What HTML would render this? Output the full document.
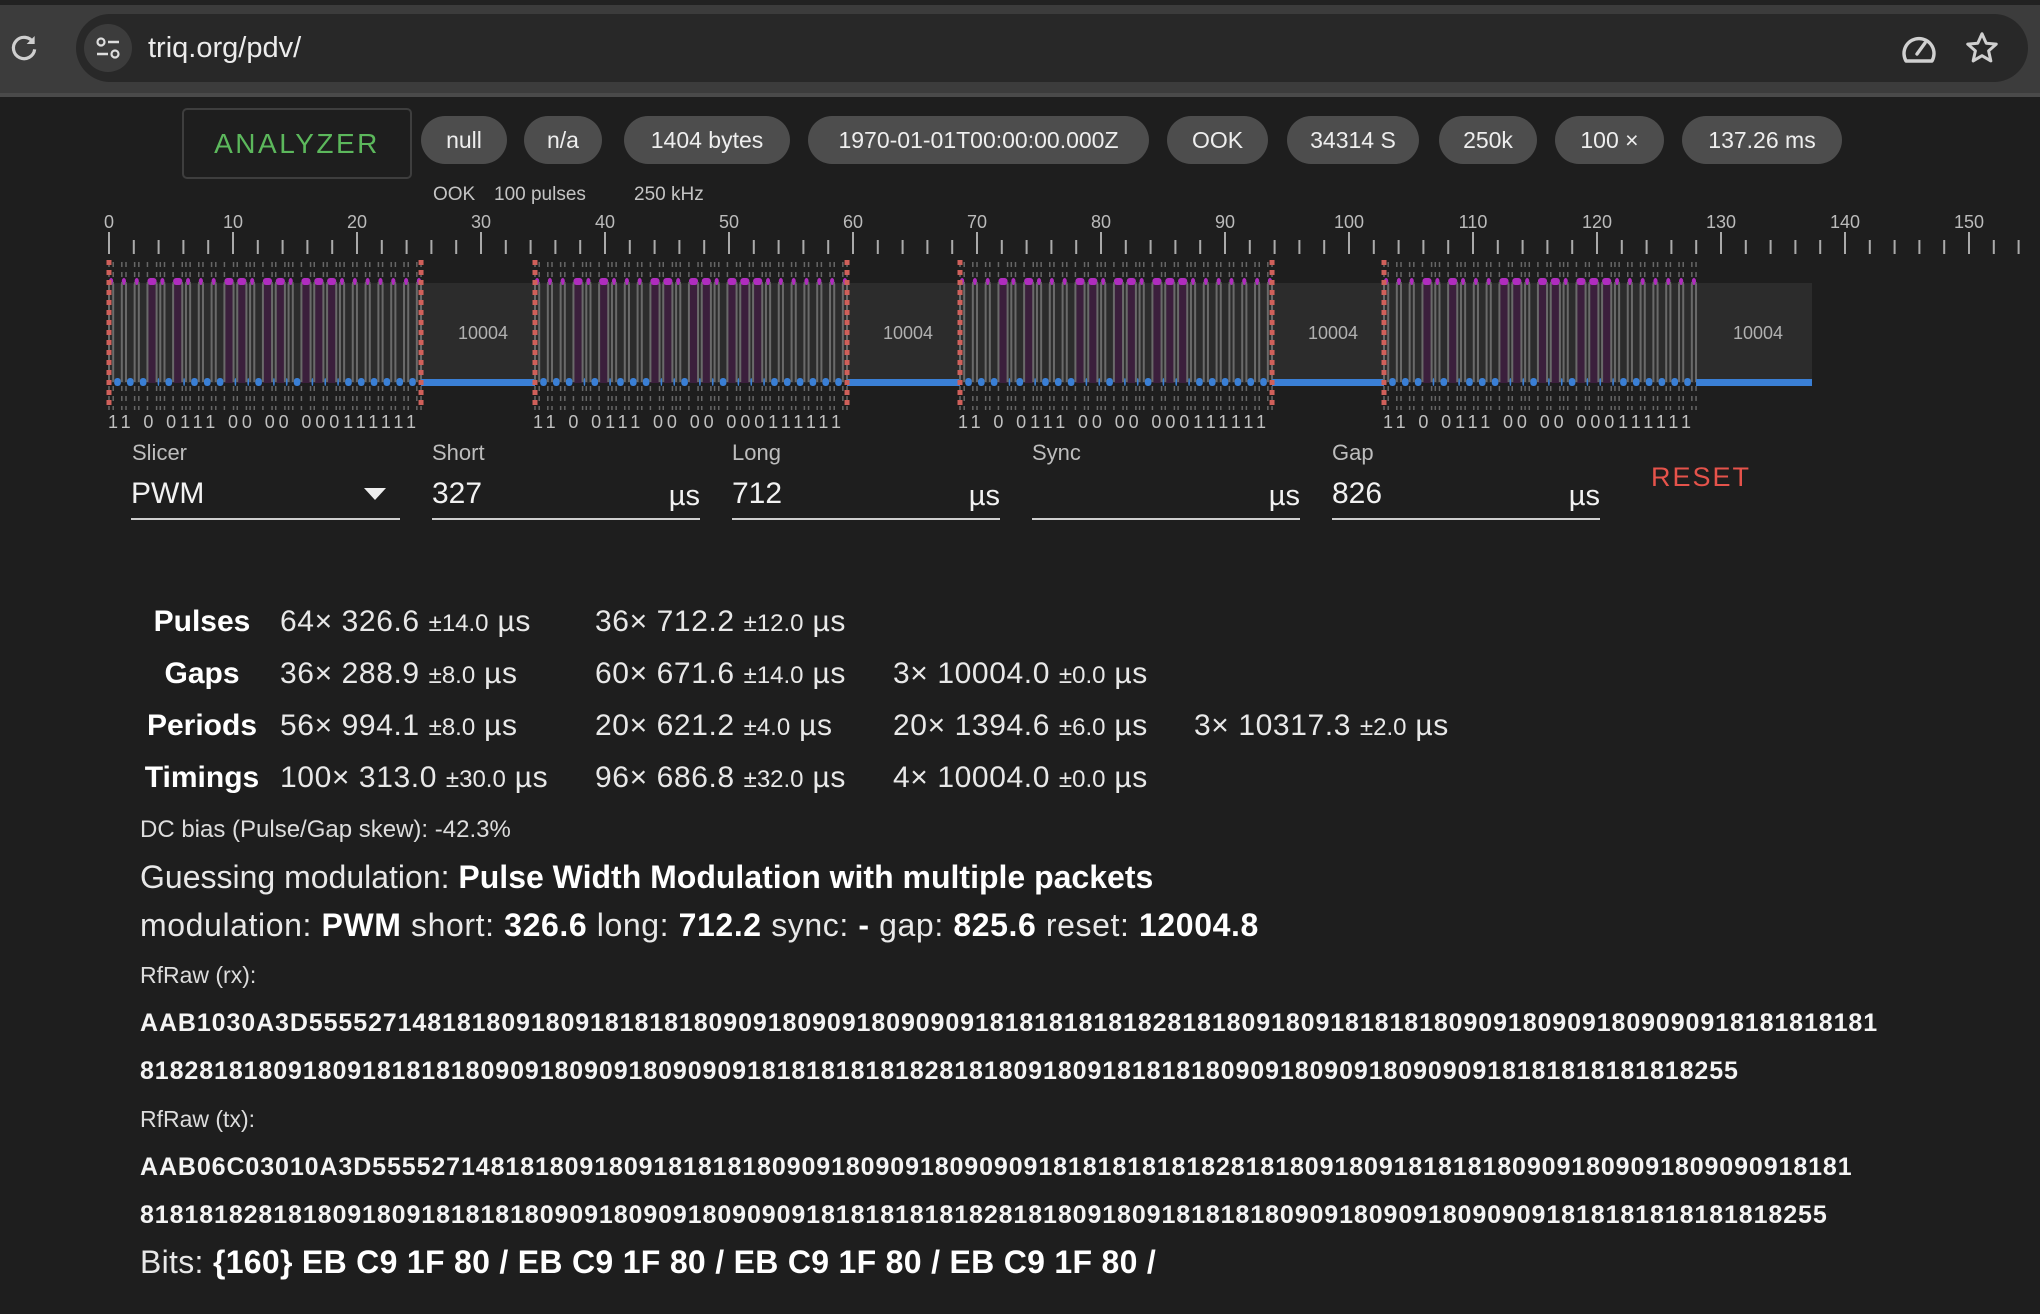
<!DOCTYPE html>
<html><head><meta charset="utf-8">
<style>
*{margin:0;padding:0;box-sizing:border-box}
html,body{width:2040px;height:1314px;overflow:hidden;background:#1e1e1e;font-family:"Liberation Sans",sans-serif;color:#e6e6e6}
.a{position:absolute;white-space:nowrap}
.chip{position:absolute;top:116px;height:48px;border-radius:24px;background:#4d4d4d;color:#eee;font-size:23px;line-height:48px;text-align:center}
.lbl{position:absolute;top:439px;font-size:22px;color:#bdbdbd;line-height:28px}
.fld{position:absolute;top:474px;height:46px;border-bottom:2px solid #cfcfcf;font-size:30px;line-height:40px;color:#f2f2f2}
.fld .u{position:absolute;right:0;top:2px;font-size:29px}
.st{position:absolute;font-size:30px;line-height:36px;color:#e8e8e8;letter-spacing:0.6px}
.st small{font-size:24px;letter-spacing:0}
.sl{position:absolute;font-size:30px;line-height:36px;font-weight:bold;color:#fff;width:200px;text-align:center;left:102px}
.hx{position:absolute;left:140px;font-size:25px;font-weight:bold;line-height:30px;color:#f4f4f4;letter-spacing:0.9px}
</style></head><body>
<div class="a" style="left:0;top:0;width:2040px;height:96px;background:#3c3c3c"></div>
<div class="a" style="left:0;top:0;width:2040px;height:5px;background:#222"></div>
<div class="a" style="left:0;top:93px;width:2040px;height:4px;background:#4a4a4a"></div>
<svg class="a" style="left:8px;top:32px" width="32" height="32" viewBox="0 0 24 24"><path d="M19 8A8 8 0 1 0 20 13" fill="none" stroke="#cfcfcf" stroke-width="2.4"/><path d="M20 3v6h-6z" fill="#cfcfcf"/></svg>
<div class="a" style="left:76px;top:14px;width:1952px;height:68px;border-radius:34px;background:#282828"></div>
<div class="a" style="left:84px;top:24px;width:48px;height:48px;border-radius:24px;background:#3c3c3c"></div>
<svg class="a" style="left:94px;top:34px" width="28" height="28" viewBox="0 0 28 28"><circle cx="7" cy="8" r="3.5" fill="none" stroke="#ddd" stroke-width="2.2"/><path d="M14 8h11M3 20h11" stroke="#ddd" stroke-width="2.6"/><circle cx="21" cy="20" r="3.5" fill="none" stroke="#ddd" stroke-width="2.2"/></svg>
<div class="a" style="left:148px;top:30px;font-size:29px;line-height:36px;color:#ececec">triq.org/pdv/</div>
<svg class="a" style="left:1900px;top:32px" width="38" height="34" viewBox="0 0 38 34"><path d="M6 29A15 15 0 1 1 32 29Z" fill="none" stroke="#d0d0d0" stroke-width="3.4" stroke-linejoin="round"/><path d="M17 22L25 11" stroke="#d0d0d0" stroke-width="3.4" stroke-linecap="round"/></svg>
<svg class="a" style="left:1964px;top:30px" width="36" height="36" viewBox="0 0 24 24"><path d="M12 2.5l2.8 6.3 6.7.6-5.1 4.5 1.5 6.7L12 17.1 6.1 20.6l1.5-6.7L2.5 9.4l6.7-.6z" fill="none" stroke="#d0d0d0" stroke-width="2" stroke-linejoin="round"/></svg>

<div class="a" style="left:182px;top:108px;width:230px;height:71px;border:2px solid #3e3e3e;border-radius:5px;color:#5cb85c;font-size:28px;line-height:67px;text-align:center;letter-spacing:2.5px">ANALYZER</div>
<div class="chip" style="left:421px;width:86px">null</div>
<div class="chip" style="left:524px;width:78px">n/a</div>
<div class="chip" style="left:624px;width:166px">1404 bytes</div>
<div class="chip" style="left:808px;width:341px">1970-01-01T00:00:00.000Z</div>
<div class="chip" style="left:1167px;width:101px">OOK</div>
<div class="chip" style="left:1287px;width:132px">34314 S</div>
<div class="chip" style="left:1439px;width:98px">250k</div>
<div class="chip" style="left:1555px;width:109px">100 ×</div>
<div class="chip" style="left:1682px;width:160px">137.26 ms</div>

<div class="a" style="left:433px;top:183px;font-size:19px;line-height:24px;color:#c4c4c4">OOK</div>
<div class="a" style="left:494px;top:183px;font-size:19px;line-height:24px;color:#c4c4c4">100 pulses</div>
<div class="a" style="left:634px;top:183px;font-size:19px;line-height:24px;color:#c4c4c4">250 kHz</div>

<svg id="ch" class="a" style="left:0;top:200px" width="2040" height="240">
<g font-family="Liberation Sans" font-size="18" fill="#bbb" text-anchor="middle">
<text x="109" y="28">0</text><text x="233" y="28">10</text><text x="357" y="28">20</text><text x="481" y="28">30</text><text x="605" y="28">40</text><text x="729" y="28">50</text><text x="853" y="28">60</text><text x="977" y="28">70</text><text x="1101" y="28">80</text><text x="1225" y="28">90</text><text x="1349" y="28">100</text><text x="1473" y="28">110</text><text x="1597" y="28">120</text><text x="1721" y="28">130</text><text x="1845" y="28">140</text><text x="1969" y="28">150</text>
</g>
<g id="lab" font-family="Liberation Sans" font-size="18" fill="#b0b0b0" text-anchor="middle">
<text x="483" y="139">10004</text><text x="908" y="139">10004</text><text x="1333" y="139">10004</text><text x="1758" y="139">10004</text>
</g>
<g font-family="Liberation Sans" font-size="18" fill="#c0c0c0">
<text x="108" y="228" textLength="308" lengthAdjust="spacing">11 0 0111 00 00 000111111</text><text x="533" y="228" textLength="308" lengthAdjust="spacing">11 0 0111 00 00 000111111</text><text x="958" y="228" textLength="308" lengthAdjust="spacing">11 0 0111 00 00 000111111</text><text x="1383" y="228" textLength="308" lengthAdjust="spacing">11 0 0111 00 00 000111111</text>
</g>
</svg>
<script>
(function(){
var s=document.getElementById('ch'),h='';
for(var u=0;u<=155;u+=2){var x=109+u*12.4;var maj=u%10==0;h+='<rect x="'+(x-1)+'" y="'+(maj?32:40)+'" width="2" height="'+(maj?22:14)+'" fill="#aaa"/>';}
h+='<rect x="109" y="83" width="1703" height="100" fill="#2c2c2c"/>';
var pat="SSSLSLSSSLLSLLSLLLSSSSSSS",k=0.01283;
var starts=[109,535,960,1384];
starts.forEach(function(x0,pi){
 var t=x0,edges=[t];
 for(var i=0;i<25;i++){var L=pat[i]=='L';var w=(L?712:327)*k;
  if(L)h+='<rect x="'+t+'" y="83" width="'+w+'" height="100" fill="#3b1f3c"/>';
  h+='<rect x="'+t+'" y="78" width="'+w+'" height="7" rx="3" fill="#b02cbf"/>';
  t+=w;edges.push(t);
  if(i<24){var g=(L?289:672)*k;h+='<rect x="'+(t+1)+'" y="178" width="'+(g-2)+'" height="8" rx="3" fill="#3a7fd5"/>';t+=g;edges.push(t);}
 }
 edges.forEach(function(e){
  h+='<line x1="'+e+'" y1="62" x2="'+e+'" y2="84" stroke="#666" stroke-width="1.5" stroke-dasharray="5,5"/>';
  h+='<line x1="'+e+'" y1="186" x2="'+e+'" y2="210" stroke="#666" stroke-width="1.5" stroke-dasharray="5,5"/>';
  h+='<line x1="'+e+'" y1="84" x2="'+e+'" y2="182" stroke="#6a6a6a" stroke-width="2"/>';
 });
 var end=t;
 var nx=(pi<3?starts[pi+1]:1812);
 h+='<rect x="'+end+'" y="179" width="'+(nx-end)+'" height="7" fill="#3a7fd5"/>';
 h+='<line x1="'+x0+'" y1="60" x2="'+x0+'" y2="210" stroke="#d0605a" stroke-width="5" stroke-dasharray="5,5"/>';
 if(pi<3)h+='<line x1="'+end+'" y1="60" x2="'+end+'" y2="210" stroke="#d0605a" stroke-width="5" stroke-dasharray="5,5"/>';
});
s.insertAdjacentHTML('afterbegin',h);
})();
</script>

<div class="lbl" style="left:132px">Slicer</div>
<div class="fld" style="left:131px;width:269px">PWM<svg style="position:absolute;right:14px;top:14px" width="22" height="12"><path d="M0 0h22L11 12z" fill="#eee"/></svg></div>
<div class="lbl" style="left:432px">Short</div>
<div class="fld" style="left:432px;width:268px">327<span class="u">µs</span></div>
<div class="lbl" style="left:732px">Long</div>
<div class="fld" style="left:732px;width:268px">712<span class="u">µs</span></div>
<div class="lbl" style="left:1032px">Sync</div>
<div class="fld" style="left:1032px;width:268px"><span class="u">µs</span></div>
<div class="lbl" style="left:1332px">Gap</div>
<div class="fld" style="left:1332px;width:268px">826<span class="u">µs</span></div>
<div class="a" style="left:1651px;top:462px;font-size:27px;line-height:30px;color:#e5534b;letter-spacing:2px">RESET</div>

<div class="sl" style="top:604px">Pulses</div>
<div class="sl" style="top:656px">Gaps</div>
<div class="sl" style="top:708px">Periods</div>
<div class="sl" style="top:760px">Timings</div>
<div class="st" style="left:280px;top:604px">64× 326.6 <small>±14.0</small> µs</div>
<div class="st" style="left:595px;top:604px">36× 712.2 <small>±12.0</small> µs</div>
<div class="st" style="left:280px;top:656px">36× 288.9 <small>±8.0</small> µs</div>
<div class="st" style="left:595px;top:656px">60× 671.6 <small>±14.0</small> µs</div>
<div class="st" style="left:893px;top:656px">3× 10004.0 <small>±0.0</small> µs</div>
<div class="st" style="left:280px;top:708px">56× 994.1 <small>±8.0</small> µs</div>
<div class="st" style="left:595px;top:708px">20× 621.2 <small>±4.0</small> µs</div>
<div class="st" style="left:893px;top:708px">20× 1394.6 <small>±6.0</small> µs</div>
<div class="st" style="left:1194px;top:708px">3× 10317.3 <small>±2.0</small> µs</div>
<div class="st" style="left:280px;top:760px">100× 313.0 <small>±30.0</small> µs</div>
<div class="st" style="left:595px;top:760px">96× 686.8 <small>±32.0</small> µs</div>
<div class="st" style="left:893px;top:760px">4× 10004.0 <small>±0.0</small> µs</div>

<div class="a" style="left:140px;top:816px;font-size:24px;line-height:28px;color:#ddd">DC bias (Pulse/Gap skew): -42.3%</div>
<div class="a" style="left:140px;top:859px;font-size:32px;line-height:36px;color:#e8e8e8">Guessing modulation: <b style="color:#fff">Pulse Width Modulation with multiple packets</b></div>
<div class="a" style="left:140px;top:907px;font-size:32px;line-height:36px;color:#e8e8e8;letter-spacing:0.6px">modulation: <b style="color:#fff">PWM</b> short: <b style="color:#fff">326.6</b> long: <b style="color:#fff">712.2</b> sync: <b style="color:#fff">-</b> gap: <b style="color:#fff">825.6</b> reset: <b style="color:#fff">12004.8</b></div>
<div class="a" style="left:140px;top:961px;font-size:23px;line-height:28px;color:#ddd">RfRaw (rx):</div>
<div class="hx" style="top:1008px">AAB1030A3D5555271481818091809181818180909180909180909091818181818182818180918091818181809091809091809090918181818181</div>
<div class="hx" style="top:1056px">818281818091809181818180909180909180909091818181818182818180918091818181809091809091809090918181818181818255</div>
<div class="a" style="left:140px;top:1105px;font-size:23px;line-height:28px;color:#ddd">RfRaw (tx):</div>
<div class="hx" style="top:1152px">AAB06C03010A3D5555271481818091809181818180909180909180909091818181818182818180918091818181809091809091809090918181</div>
<div class="hx" style="top:1200px">818181828181809180918181818090918090918090909181818181818281818091809181818180909180909180909091818181818181818255</div>
<div class="a" style="left:140px;top:1244px;font-size:32px;line-height:36px;color:#e8e8e8;letter-spacing:0.3px">Bits: <b style="color:#fff">{160} EB C9 1F 80 / EB C9 1F 80 / EB C9 1F 80 / EB C9 1F 80 /</b></div>
</body></html>
